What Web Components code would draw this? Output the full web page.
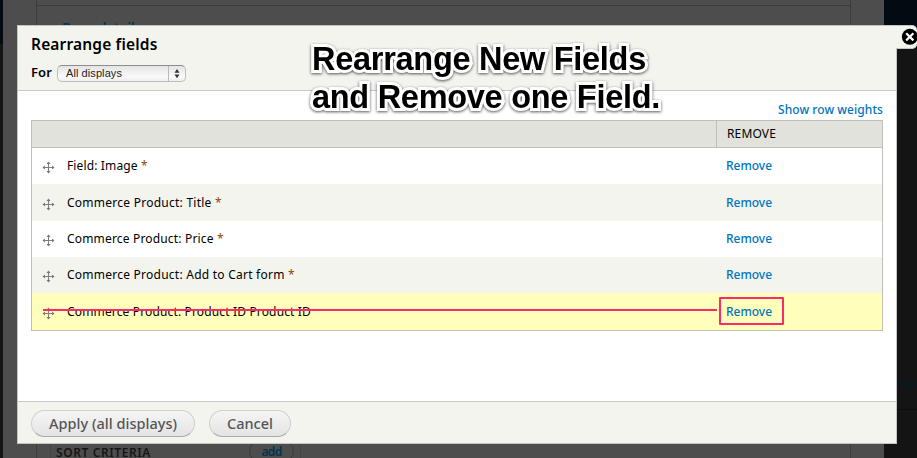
<!DOCTYPE html>
<html lang="en"><head><meta charset="utf-8"><title>Rearrange fields</title>
<style>
html,body{margin:0;height:458px;overflow:hidden}
body{font-family:"Noto Sans","Open Sans",sans-serif;font-size:12px;color:#000}
</style></head><body>
<views-page></views-page>
<script>
const define=(name,html,setup)=>customElements.define(name,class extends HTMLElement{
  connectedCallback(){
    if(this.shadowRoot)return;
    const t=document.createElement('template');t.innerHTML=html;
    this.attachShadow({mode:'open'}).append(t.content.cloneNode(true));
    if(setup)setup.call(this,this.shadowRoot);
  }
});
// Tracks its text so that it fills the width given by "w".
define('fit-text','<style>:host{display:inline-block;white-space:pre;text-align:left;line-height:inherit}</style><span><slot></slot></span>',function(r){
  const s=r.querySelector('span'),n=this.textContent.length,w=+this.getAttribute('w');
  const d=(w-s.getBoundingClientRect().width)/n;
  s.style.letterSpacing=d+'px';this.style.width=w+'px';
});
define('drag-handle',`<style>:host{display:block;width:13px;height:13px}svg{display:block}</style>
<svg width="13" height="13" viewBox="0 0 13 13"><path d="M6.5 1v11M1 6.5h11" stroke="#808080" stroke-width="1.1"/><path d="M6.5 .5 4.500 2.900h4zM6.5 12.500 4.500 10.100h4zM.5 6.5 2.900 4.500v4zM12.500 6.5 10.100 4.500v4z" fill="#777"/></svg>`);
define('display-select',`<style>
:host{display:flex;box-sizing:border-box;width:129px;height:17px;border:1px solid #bdbdbd;border-top-color:#8d8d8d;border-radius:5px;background:linear-gradient(#e4e4e4,#fafafa 70%,#eee);font:11px/15px "Liberation Sans",sans-serif;color:#222}
.v{flex:1;padding-left:8px}.a{width:16px;border-left:1px solid #bbb}svg{display:block}</style>
<div class="v"><slot></slot></div><div class="a"><svg width="16" height="15"><path d="M5.5 6.7 8 3l2.500 3.700zM5.500 8.500 8 12.200l2.500-3.700z" fill="#333"/></svg></div>`);
define('field-row',`<style>
:host{display:grid;grid-template-columns:685px 1fr;height:36px;background:#fff}
:host([tall]){height:37px}:host([odd]){background:#f3f4ee}:host([changed]){background:#ffffbb}
.n{display:flex;align-items:flex-start;padding-left:10px}
drag-handle{margin-top:13px}.t{padding:8px 0 0 12px;line-height:19px}
.r{padding:8px 0 0 9px;line-height:19px;color:#0074bd;font-weight:500;position:relative}
:host([tall]) .t,:host([tall]) .r{padding-top:9px}:host([tall]) drag-handle{margin-top:14px}
.strike,.box{display:none}
:host([changed]) .strike{display:block;position:absolute;left:-674px;top:16px;width:674px;height:2px;background:#ff2970}
:host([changed]) .box{display:block;position:absolute;left:2px;top:4px;width:61px;height:24px;border:2px solid #ff2970;border-radius:1px}
</style><div class="n"><drag-handle></drag-handle><div class="t"><slot></slot></div></div><div class="r"><fit-text w="46">Remove</fit-text><span class="strike"></span><span class="box"></span></div>`);
define('field-table',`<style>
:host{display:block;box-sizing:border-box;width:852px;border:1px solid #bebfb9}
.h{display:grid;grid-template-columns:684px 1fr;height:26px;border-bottom:1px solid #bebfb9;background:#e1e2dc}
.h div{border-left:1px solid #bebfb9;padding-left:10px;line-height:25px}</style>
<div class="h"><span></span><div><fit-text w="49">REMOVE</fit-text></div></div><slot></slot>`);
define('pill-button',`<style>
:host{display:block;box-sizing:border-box;height:27px;border:1px solid #d0d0ce;border-bottom-color:#aaa;border-radius:14px;background:linear-gradient(#f5f5f5,#e4e4e4);color:#555;font-size:14.500px;line-height:25px;text-align:center;font-weight:500}</style><slot></slot>`);
define('close-tab',`<style>:host{position:absolute;left:878px;top:-1px;width:21px;height:24px;box-sizing:border-box;background:#f3f4ee;border:solid #c4c4c4;border-width:1px 0;border-radius:0 5px 5px 0}svg{position:absolute;left:5px;top:2px}</style>
<svg width="17" height="18"><circle cx="8.800" cy="8.800" r="8"/><path d="m5.200 5.200 7.200 7.200m0-7.200-7.200 7.200" stroke="#fff" stroke-width="2.200"/></svg>`);
define('views-dialog',`<style>
:host{position:absolute;left:17px;top:25px;box-sizing:border-box;width:880px;height:419px;border:1px solid #c4c4c4;background:#fff;display:flex;flex-direction:column}
header{height:65px;box-sizing:border-box;border-bottom:1px solid #c9c9c9;background:#f3f4ee;padding:8px 13px;font-weight:600}
h1{margin:0;font-size:15.500px;font-weight:600;line-height:20px}
.for{display:flex;gap:5px;margin-top:10px;line-height:17px;font-size:13px}
display-select{margin-top:1px}
main{flex:1;padding:8px 13px 0;display:flex;flex-direction:column}
.weights{height:21px;line-height:21px;text-align:right;color:#0074bd;font-weight:500}
footer{height:42px;box-sizing:border-box;border-top:1px solid #c9c9c9;background:#f3f4ee;padding:8px 13px;display:flex;gap:14px}
</style>
<header><h1><fit-text w="126.500">Rearrange fields</fit-text></h1><div class="for"><fit-text w="21">For</fit-text><display-select><fit-text w="56">All displays</fit-text></display-select></div></header>
<main><div class="weights"><fit-text w="105">Show row weights</fit-text></div>
<field-table>
<field-row><fit-text w="74">Field: Image </fit-text><fit-text w="6" style="color:#8f4700">*</fit-text></field-row>
<field-row odd tall><fit-text w="148">Commerce Product: Title </fit-text><fit-text w="6" style="color:#8f4700">*</fit-text></field-row>
<field-row><fit-text w="150">Commerce Product: Price </fit-text><fit-text w="6" style="color:#8f4700">*</fit-text></field-row>
<field-row odd><fit-text w="221">Commerce Product: Add to Cart form </fit-text><fit-text w="6" style="color:#8f4700">*</fit-text></field-row>
<field-row changed tall><fit-text w="244">Commerce Product: Product ID Product ID</fit-text></field-row>
</field-table></main>
<footer><pill-button style="width:164px"><fit-text w="128">Apply (all displays)</fit-text></pill-button><pill-button style="width:82px"><fit-text w="46">Cancel</fit-text></pill-button></footer>
<close-tab></close-tab>`);
define('big-caption',`<style>
:host{position:absolute;left:312px;top:40px;font:bold 32.500px/38px "Liberation Sans",sans-serif;color:#000;filter:drop-shadow(0 1px 1.500px #000a)}
div{-webkit-text-stroke:6px #fff;paint-order:stroke fill;stroke-linejoin:round;height:38px}
fit-text::part(x){color:#000}</style>
<div><fit-text w="334">Rearrange New Fields</fit-text></div><div><fit-text w="348">and Remove one Field.</fit-text></div>`);
define('page-backdrop',`<style>
:host{position:absolute;inset:0;display:grid;grid-template-columns:3px 881px 33px;background:#141414;overflow:hidden}
.l{background:linear-gradient(#030a12 44px,#141414 44px)}
.m{background:#4d4d4d;position:relative}.r{background:linear-gradient(#020a12 0 48px,#141414 48px);position:relative}
.p{position:absolute;left:33px;top:-1px;width:815px;height:470px;border:1px solid #3c3c3c;box-sizing:border-box}
.q{height:5px;border-bottom:1px solid #3c3c3c}
.d{position:absolute;left:59px;top:18px;font-size:14px;line-height:19px;font-weight:600;color:#003554}
.s{position:absolute;left:47px;top:438px;width:251px;height:30px;border:solid #444;border-width:0 1px;padding-left:5px;color:#151515;line-height:29px;font-weight:600;box-sizing:border-box}
.a{position:absolute;left:246px;top:440px;width:45px;height:23px;border:1px solid #3b3b3b;border-radius:12px;text-align:center;line-height:21px;color:#003450;font-weight:600;box-sizing:border-box}
.more{position:absolute;left:14px;top:376px;font:11px/16px "Liberation Sans",sans-serif;color:#001a2a}
.ln{position:absolute;left:13px;top:409px;width:20px;height:1px;background:#0c0c0c}
</style><div class="l"></div><div class="m"><div class="p"><div class="q"></div></div><div class="d"><fit-text w="79">Page details</fit-text></div><div class="s"><fit-text w="95">SORT CRITERIA</fit-text></div><div class="a"><fit-text w="20">add</fit-text></div></div><div class="r"><div class="more">more</div><div class="ln"></div></div>`);
define('views-page',`<style>:host{display:block;position:relative;width:917px;height:458px;overflow:hidden}</style><page-backdrop></page-backdrop><views-dialog></views-dialog><big-caption></big-caption>`);
</script></body></html>
